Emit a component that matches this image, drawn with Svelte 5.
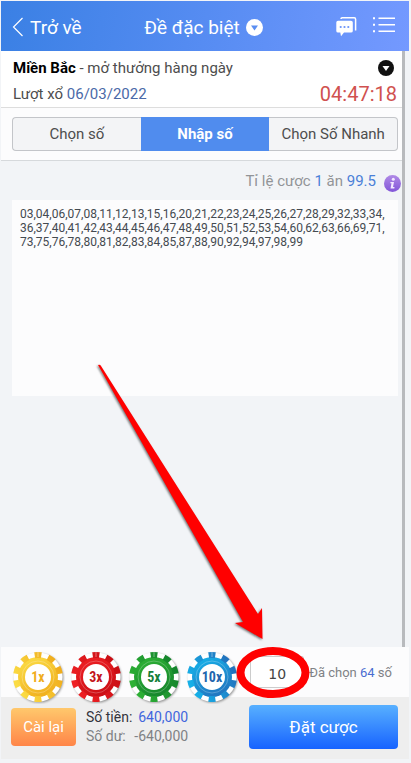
<script lang="ts">
  const tabs = ["Chọn số", "Nhập số", "Chọn Số Nhanh"];
  const chips = [
    { times: 1, light: "#fbdc45", dark: "#f0ad1c", text: "#f0ad1c" },
    { times: 3, light: "#ee2024", dark: "#c90e14", text: "#c4161c" },
    { times: 5, light: "#2eb135", dark: "#14842c", text: "#15803a" },
    { times: 10, light: "#16b0e8", dark: "#2272bd", text: "#2165ad" },
  ];

  let active = $state(1);
  let amount = $state("10");
  let numbers = $state(
    "03,04,06,07,08,11,12,13,15,16,20,21,22,23,24,25,26,27,28,29,32,33,34," +
      "36,37,40,41,42,43,44,45,46,47,48,49,50,51,52,53,54,60,62,63,66,69,71," +
      "73,75,76,78,80,81,82,83,84,85,87,88,90,92,94,97,98,99"
  );

  let count = $derived(numbers.split(",").filter((n) => n.trim()).length);
  let total = $derived((count * Number(amount) * 1000).toLocaleString("en-US"));
</script>

<div class="page">
  <header>
    <button class="back">
      <svg width="12" height="20" viewBox="0 0 12 20">
        <path d="M10.500 1 L1.500 10 L10.500 19" fill="none" stroke="#fff" stroke-width="1.200" />
      </svg>
      Trở về
    </button>
    <button class="title">
      Đề đặc biệt
      <svg width="17" height="17" viewBox="0 0 17 17">
        <circle cx="8.500" cy="8.500" r="8.500" fill="#fff" />
        <path d="M5 6.500 H12 L8.500 11.500 Z" fill="#5a8ef2" />
      </svg>
    </button>
    <div class="actions">
      <button aria-label="Tin nhắn">
        <svg width="21" height="20" viewBox="0 0 21 20">
          <path d="M5 2 Q5 .8 6.200 .8 H18.200 Q19.600 .8 19.600 2.200 V13.500" fill="none" stroke="#fff" stroke-width="1.500" />
          <path d="M2 3.800 H15 Q16.800 3.800 16.800 5.500 V14 Q16.800 15.600 15 15.600 H8 L5 19.200 L4.300 15.600 H2 Q.3 15.600 .3 14 V5.500 Q.3 3.800 2 3.800 Z" fill="#fff" />
          <g fill="#6c94fa">
            <circle cx="4.700" cy="10" r="1.100" />
            <circle cx="8.500" cy="10" r="1.100" />
            <circle cx="12.300" cy="10" r="1.100" />
          </g>
        </svg>
      </button>
      <button aria-label="Danh mục">
        <svg width="22" height="20" viewBox="0 0 22 20" fill="#fff">
          <path d="M5.500 .5 H22 V2 H5.500 Z M5.500 7 H22 V8.500 H5.500 Z M5.500 13.500 H22 V15 H5.500 Z" />
          <path d="M0 .3 H2 V2.200 H0 Z M0 6.800 H2 V8.700 H0 Z M0 13.300 H2 V15.200 H0 Z" />
        </svg>
      </button>
    </div>
  </header>

  <main>
    <section class="info">
      <div class="line">
        <p><b>Miền Bắc</b> - mở thưởng hàng ngày</p>
        <button aria-label="Chọn đài">
          <svg width="16" height="16" viewBox="0 0 16 16">
            <circle cx="8" cy="8" r="8" fill="#111" />
            <path d="M4.500 6 H11.500 L8 11 Z" fill="#fff" />
          </svg>
        </button>
      </div>
      <div class="line">
        <p>Lượt xổ <span class="date">06/03/2022</span></p>
        <time>04:47:18</time>
      </div>
    </section>

    <nav>
      {#each tabs as tab, i}
        <button class:active={active === i} onclick={() => (active = i)}>{tab}</button>
      {/each}
    </nav>

    <section class="entry">
      <div class="rate">
        <label for="numbers">Tỉ lệ cược <em>1</em> ăn <em>99.5</em></label>
        <button aria-label="Thông tin">
          <svg width="17" height="17" viewBox="0 0 17 17">
            <defs>
              <linearGradient id="info" x2="0" y2="1">
                <stop stop-color="#b08ae6" />
                <stop offset="1" stop-color="#8256d8" />
              </linearGradient>
            </defs>
            <circle cx="8.500" cy="8.500" r="8.500" fill="url(#info)" />
            <circle cx="9.300" cy="4.300" r="1.500" fill="#f3e9ff" />
            <path d="M6.500 7 H10 L9 12 H10.500 L10.300 13.500 H6.500 L7.500 8.300 H6.300 Z" fill="#f3e9ff" />
          </svg>
        </button>
      </div>
      <textarea id="numbers" bind:value={numbers}></textarea>
    </section>
  </main>

  <section class="stake">
    <div class="chips">
      {#each chips as chip}
        <button aria-label="{chip.times}x" onclick={() => (amount = String(Number(amount) * chip.times))}>
          <svg width="54" height="54" viewBox="-27 -27 54 54">
            <defs>
              <linearGradient id="chip{chip.times}" gradientUnits="userSpaceOnUse" x1="-10" y1="-20" x2="10" y2="20">
                <stop stop-color={chip.light} />
                <stop offset="1" stop-color={chip.dark} />
              </linearGradient>
            </defs>
            <circle class="disc" r="24.500" fill="#fff" />
            <circle r="20" fill="url(#chip{chip.times})" />
            <!-- ten teeth: a ring of dashes, each 36 degrees apart -->
            <circle
              r="22"
              fill="none"
              stroke="url(#chip{chip.times})"
              stroke-width="6"
              pathLength="100"
              stroke-dasharray="5 5"
              stroke-dashoffset="2.500"
              transform="rotate(-90)"
            />
            <path d="M0 -25 V-20" stroke="#fff" stroke-width="1" opacity=".4" />
            <circle r="16" fill="none" stroke="#fff" stroke-width="1" opacity=".25" />
            <circle r="13" fill="#fff" />
            <text y="5" text-anchor="middle" fill={chip.text}>{chip.times}x</text>
          </svg>
        </button>
      {/each}
    </div>
    <div class="amount">
      <input type="text" inputmode="numeric" aria-label="Số tiền cược" bind:value={amount} />
      <!-- pointer and ring showing where the stake goes -->
      <svg class="pointer" width="220" height="344" viewBox="0 0 220 344">
        <path d="M5 5 Q7 4 8 6 L165 254 L169 248 L169.500 279 L142 263 L150 262 Z" />
        <ellipse cx="180" cy="312.500" rx="32.500" ry="21.500" />
      </svg>
    </div>
    <p>Đã chọn <span>{count}</span> số</p>
  </section>

  <footer>
    <button class="reset">Cài lại</button>
    <dl>
      <dt>Số tiền:</dt>
      <dd class="total">{total}</dd>
      <dt class="muted">Số dư:</dt>
      <dd class="muted">-{total}</dd>
    </dl>
    <button class="submit">Đặt cược</button>
  </footer>
</div>

<style>
  :global(body) {
    margin: 0;
    background: #f2f4f7;
  }
  .page {
    display: flex;
    flex-direction: column;
    box-sizing: border-box;
    min-height: 100vh;
    padding: 1px 2px 4px 1px;
    font-family: Roboto, "Liberation Sans", sans-serif;
    font-size: 15px;
    color: #4d4d4d;
    background: #f2f4f7;
  }
  button {
    padding: 0;
    border: 0;
    background: none;
    color: inherit;
    font: inherit;
    cursor: pointer;
  }
  svg {
    display: block;
  }
  p {
    margin: 0;
  }
  header {
    display: grid;
    grid-template-columns: 1fr auto 1fr;
    align-items: center;
    box-sizing: border-box;
    height: 50px;
    padding: 2px 14px 0 11px;
    background: linear-gradient(100deg, #3a80e4, #568cf2 50%, #7499ff);
    color: #fff;
    font-size: 19px;
  }
  .back,
  .title {
    display: flex;
    align-items: center;
    gap: 6px;
  }
  .actions {
    display: flex;
    justify-content: flex-end;
    gap: 16px;
  }
  main {
    display: flex;
    flex: 1;
    flex-direction: column;
    border-right: 3px solid #b8babd;
    margin-right: 4px;
  }
  .info {
    padding: 4px 5px 0 12px;
    border-bottom: 1px solid #ddd;
    background: #fff;
  }
  .line {
    display: flex;
    align-items: center;
    justify-content: space-between;
    height: 26px;
  }
  .line button {
    padding-right: 3px;
  }
  .line b {
    color: #000;
  }
  .date {
    color: #4a69a8;
  }
  time {
    color: #d0514f;
    font-size: 20px;
  }
  nav {
    display: grid;
    grid-template-columns: repeat(3, 1fr);
    padding: 9px 4px 9px 11px;
    border-bottom: 1px solid #d6d9dc;
    background: #fcfcfd;
  }
  nav button {
    height: 34px;
    border: 1px solid #c3c5c9;
    background: #f3f4f6;
    white-space: nowrap;
  }
  nav button:first-child {
    border-right: 0;
    border-radius: 4px 0 0 4px;
  }
  nav button:last-child {
    border-left: 0;
    border-radius: 0 4px 4px 0;
  }
  nav .active {
    border-color: #508cee;
    background: #508cee;
    color: #fff;
    font-weight: bold;
  }
  .entry {
    display: flex;
    flex-direction: column;
    padding: 0 4px 0 11px;
  }
  .rate {
    display: flex;
    align-items: center;
    justify-content: flex-end;
    gap: 8px;
    height: 39px;
    margin-right: -3px;
    color: #929498;
  }
  .rate button {
    padding-top: 6px;
  }
  .rate em {
    color: #4a80d8;
    font-style: normal;
  }
  textarea {
    box-sizing: border-box;
    width: 100%;
    height: 196px;
    padding: 7px 8px;
    border: 0;
    outline: none;
    resize: none;
    background: #fcfcfd;
    color: #444a50;
    font: 12px/14px Roboto, "Liberation Sans", sans-serif;
    overflow-wrap: anywhere;
  }
  .stake {
    display: flex;
    align-items: center;
    height: 50px;
    padding: 0 17px 0 10px;
    background: #fcfcfd;
    color: #808285;
    font-size: 13px;
    white-space: nowrap;
  }
  .chips {
    display: flex;
    flex: 1;
    gap: 4px;
    height: 44px;
  }
  .chips button {
    height: 54px;
  }
  .chips svg {
    position: relative;
  }
  .disc {
    filter: drop-shadow(1px 1px 1px #0006);
  }
  .chips text {
    font: bold 14px "Roboto Condensed", Roboto, sans-serif;
  }
  .amount {
    position: relative;
    margin-right: 5px;
  }
  .amount input {
    display: block;
    box-sizing: border-box;
    width: 54px;
    height: 32px;
    padding: 4px 0 0;
    border: 1px solid #ccc;
    border-radius: 2px;
    outline: none;
    background: #fff;
    color: #444;
    font: 14px "DejaVu Sans", sans-serif;
    text-align: center;
  }
  .pointer {
    position: absolute;
    right: -9px;
    bottom: -16px;
    z-index: 1;
    pointer-events: none;
  }
  .pointer path {
    fill: #f00;
    filter: drop-shadow(-1px 1px 1px #0008);
  }
  .pointer ellipse {
    fill: none;
    stroke: #f00;
    stroke-width: 8;
  }
  .stake span {
    color: #4a6cd0;
  }
  footer {
    display: flex;
    align-items: center;
    box-sizing: border-box;
    gap: 10px;
    height: 62px;
    padding: 0 11px 2px 10px;
    background: #eee;
  }
  footer button {
    border-radius: 4px;
    color: #fff;
  }
  .reset {
    width: 65px;
    height: 38px;
    background: linear-gradient(#ffc86c, #ff8548);
  }
  dl {
    display: grid;
    grid-template-columns: auto auto;
    flex: 1;
    justify-content: start;
    gap: 0 2px;
    margin: 0;
    font-size: 14px;
    line-height: 19px;
    color: #34343c;
  }
  dd {
    margin: 0;
    text-align: right;
  }
  .total {
    color: #4166dd;
  }
  .muted {
    color: #808285;
  }
  .submit {
    width: 149px;
    height: 44px;
    background: linear-gradient(#58b0ff, #1763ff);
    font-size: 17px;
  }
</style>
